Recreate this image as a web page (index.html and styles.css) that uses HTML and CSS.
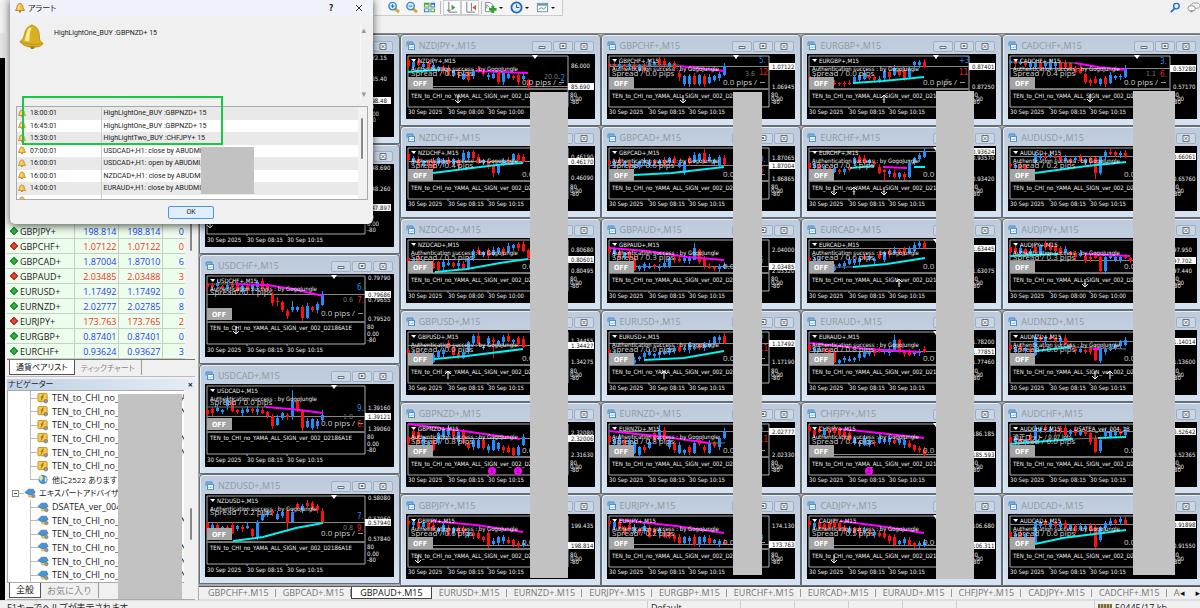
FILE: index.html
```html
<!DOCTYPE html>
<html lang="ja">
<head>
<meta charset="utf-8">
<title>GBPAUD+,M15</title>
<link rel="stylesheet" href="styles.css">
</head>
<body>
<svg class="defs" aria-hidden="true">
  <symbol id="bell" viewBox="0 0 28 28"><path d="M13 2q2-2 4 0c5 2 6 7 6 12 0 3 1 5 4 7q-2 4-11 4T2 19c3-2 4-4 5-8 1-5 3-8 6-9z" fill="#d8b022" stroke="#b8921f"/><path d="M12 4c-3 3-3 9-5 14l5 1c1-5 0-11 3-15z" fill="#ffec8a"/><path d="M3 19q11 5 23 2" fill="none" stroke="#b8921f"/><path d="M13 24h5l-1 3h-3z" fill="#a97a13"/></symbol>
  <symbol id="bell-small" viewBox="0 0 10 10"><path d="M5 .5c2 0 3 2 3 4l1.500 3h-9L2 4.500c0-2 1-4 3-4z" fill="#f3bf4c" stroke="#c98a25"/><path d="M4 2.500v4" stroke="#fff0b0"/><path d="M4 8h2v1.500H4z" fill="#b5761b"/></symbol>
  <symbol id="script" viewBox="0 0 12 12"><rect x=".5" y=".5" width="10" height="9" rx="1" fill="#f5ca4c" stroke="#c28d22"/><path d="M7 2Q5 2 5 5T3.500 8M3.500 4.500h3" stroke="#8b5d0c" fill="none"/><circle cx="9" cy="9" r="2" fill="#999" stroke="#666" stroke-width=".6"/></symbol>
  <symbol id="expert" viewBox="0 0 14 12"><path d="M1 5 5 1l6 0 2 4-6 3z" fill="#4a94d6" stroke="#28649c" stroke-width=".7"/><path d="M4 7q4 3 7-1v3q-3 3-6 1z" fill="#e9bd52"/><circle cx="11" cy="9" r="2" fill="#999" stroke="#666" stroke-width=".6"/></symbol>
  <symbol id="globe" viewBox="0 0 12 12"><circle cx="6" cy="6" r="5" fill="#3f93e0"/><path d="M3 2q3 0 3 3L4 8Q1 6 2 3zM8 3l2 1v4L8 9z" fill="#f1e27d"/></symbol>
  <symbol id="pages" viewBox="0 0 10 10"><path d="M1 5V1h6v2M1 2h6" fill="none" stroke="#4b93d3"/><rect x="2.500" y="3.500" width="6" height="5" fill="#fff" stroke="#4b93d3"/><path d="M4 7V5.500M5.500 7V6M7 7V5" stroke="#4b93d3" stroke-width=".7"/></symbol>
</svg>

<div class="app">
  <header class="toolbar">
    <div class="tools">
      <button class="tool" aria-label="拡大"><svg viewBox="0 0 14 14"><path d="m8 8 5 4" stroke="#d9a52c" stroke-width="3"/><circle cx="6" cy="5.500" r="4" fill="#d5ecfb" stroke="#3c86c4" stroke-width="1.500"/><path d="M4 5.500h4M6 3.500v4" stroke="#2668a8"/></svg></button>
      <button class="tool" aria-label="縮小"><svg viewBox="0 0 14 14"><path d="m8 8 5 4" stroke="#d9a52c" stroke-width="3"/><circle cx="6" cy="5.500" r="4" fill="#d5ecfb" stroke="#3c86c4" stroke-width="1.500"/><path d="M4 5.500h4" stroke="#2668a8"/></svg></button>
      <button class="tool" aria-label="ウィンドウの整列"><svg viewBox="0 0 14 14"><path d="M1 2h6v5H1zM8 8h5v4H8z" fill="#4aa33a"/><path d="M8 2h5v5H8zM1 8h6v4H1z" fill="#3679bd"/><path d="M2 4h4v2H2zM9 4h3v2H9zM2 9h4v2H2zM9 9h3v2H9z" fill="#e6f3f7"/></svg></button>
      <span class="rule"></span>
      <button class="tool pressed" aria-label="自動スクロール"><svg viewBox="0 0 14 14"><path d="M3 1v11h9M1 10h4" fill="none" stroke="#777"/><path d="m6 4 4 3-4 3z" fill="#37a53d"/></svg></button>
      <button class="tool pressed" aria-label="チャートシフト"><svg viewBox="0 0 14 14"><path d="M3 1v11h9M8 2v9" fill="none" stroke="#777"/><path d="m13 4-4 3 4 3z" fill="#c95a4b"/></svg></button>
      <span class="rule"></span>
      <button class="tool wide" aria-label="インディケータ"><svg viewBox="0 0 14 14"><path d="M1.500 1.500h5l3 3v7h-8z" fill="#fff" stroke="#888"/><path d="M3 8V4l3 3" stroke="#888" fill="none"/><path d="M9.500 5v8M5.500 9h8" stroke="#24a52f" stroke-width="3"/></svg></button>
      <button class="tool wide" aria-label="時間足"><svg viewBox="0 0 14 14"><circle cx="7" cy="7" r="5.500" fill="#d8ebf8" stroke="#2369b4" stroke-width="2"/><path d="M7 4v3h3" stroke="#444" fill="none"/></svg></button>
      <button class="tool wide" aria-label="テンプレート"><svg viewBox="0 0 14 14"><rect x="1.500" y="2.500" width="11" height="9" fill="#f4faff" stroke="#6a92b4"/><path d="M2 4h10" stroke="#6a92b4" stroke-width="2"/><path d="m3 9 3-2 2 2 3-3" stroke="#5a9b3d" fill="none"/></svg></button>
    </div>
    <div class="tools-end">
      <button class="tool" aria-label="検索"><svg viewBox="0 0 14 14"><path d="m6 8-4 4" stroke="#2b6fc1" stroke-width="2"/><circle cx="8" cy="5.500" r="3" fill="#e8f3ff" stroke="#2b6fc1" stroke-width="1.500"/></svg></button>
      <button class="tool" aria-label="チャット"><svg viewBox="0 0 14 14"><ellipse cx="9" cy="5" rx="5" ry="3" fill="#eee" stroke="#999"/><ellipse cx="5" cy="8" rx="4" ry="3" fill="#fff" stroke="#888"/><path d="M4 10v3l3-3" fill="#888"/></svg></button>
    </div>
  </header>

  <div class="body">
    <aside class="side">
      <section class="market">
        <div class="market-list">
          <table class="quotes">
            <tbody>
              <tr class="up"><td>GBPJPY+</td><td>198.814</td><td>198.814</td><td>0</td></tr>
              <tr class="down"><td>GBPCHF+</td><td>1.07122</td><td>1.07122</td><td>0</td></tr>
              <tr class="up"><td>GBPCAD+</td><td>1.87004</td><td>1.87010</td><td>6</td></tr>
              <tr class="down"><td>GBPAUD+</td><td>2.03485</td><td>2.03488</td><td>3</td></tr>
              <tr class="up"><td>EURUSD+</td><td>1.17492</td><td>1.17492</td><td>0</td></tr>
              <tr class="up"><td>EURNZD+</td><td>2.02777</td><td>2.02785</td><td>8</td></tr>
              <tr class="down"><td>EURJPY+</td><td>173.763</td><td>173.765</td><td>2</td></tr>
              <tr class="up"><td>EURGBP+</td><td>0.87401</td><td>0.87401</td><td>0</td></tr>
              <tr class="up"><td>EURCHF+</td><td>0.93624</td><td>0.93627</td><td>3</td></tr>
            </tbody>
          </table>
          <span class="thumb market-thumb"></span>
        </div>
        <nav class="panel-tabs market-tabs"><button class="active">通貨ペアリスト</button><button>ティックチャート</button></nav>
      </section>
      <section class="navigator">
        <h2 class="panel-title">ナビゲーター<button aria-label="閉じる">×</button></h2>
        <ul class="tree">
          <li><svg><use href="#script"/></svg>TEN_to_CHI_no_TEN_ver_002_YAMAI</li>
          <li><svg><use href="#script"/></svg>TEN_to_CHI_no_YAMA_ALL_SIGNI</li>
          <li><svg><use href="#script"/></svg>TEN_to_CHI_no_YAMA_ALL_SIG</li>
          <li><svg><use href="#script"/></svg>TEN_to_CHI_no_YAMA_ALL_SIGN</li>
          <li><svg><use href="#script"/></svg>TEN_to_CHI_no_YAMA_ALL_SIGN</li>
          <li><svg><use href="#script"/></svg>TEN_to_CHI_no_YAMA_ALL</li>
          <li class="last"><svg><use href="#globe"/></svg>他に2522 あります</li>
          <li class="parent"><span class="expander"></span><svg><use href="#expert"/></svg>エキスパートアドバイザ</li>
          <li><svg><use href="#expert"/></svg>DSATEA_ver_004</li>
          <li><svg><use href="#expert"/></svg>TEN_to_CHI_no_YAMA_ALL_SIGN_</li>
          <li><svg><use href="#expert"/></svg>TEN_to_CHI_no_YAMA_ALL_SIG</li>
          <li><svg><use href="#expert"/></svg>TEN_to_CHI_no_YAMA_ALL_SIGN_</li>
          <li><svg><use href="#expert"/></svg>TEN_to_CHI_no_YAMA_ALL_SIGN</li>
          <li><svg><use href="#expert"/></svg>TEN_to_CHI_no_YAMA_ALL_SIGN</li>
        </ul>
        <nav class="panel-tabs nav-tabs"><button class="active">全般</button><button>お気に入り</button></nav>
        <span class="thumb nav-thumb"></span>
        <span class="mask mask-nav"></span>
      </section>
    </aside>

    <main class="workspace">
      <div class="mdi" id="mdi"></div>
      <nav class="chart-tabs">
        <button>GBPCHF+.M15</button><button>GBPCAD+.M15</button><button class="active">GBPAUD+.M15</button><button>EURUSD+.M15</button><button>EURNZD+.M15</button><button>EURJPY+.M15</button><button>EURGBP+.M15</button><button>EURCHF+.M15</button><button>EURCAD+.M15</button><button>EURAUD+.M15</button><button>CHFJPY+.M15</button><button>CADJPY+.M15</button><button>CADCHF+.M15</button><button>AUDUSD+.M15</button>
        <span class="tab-arrows"><button aria-label="前へ">◂</button><button aria-label="次へ">▸</button></span>
      </nav>
    </main>
  </div>

  <footer class="status">
    <span class="help">F1キーでヘルプが表示されます</span><span class="profile">Default</span><span></span><span></span><span></span><span></span><span></span><span class="traffic"><i></i>50445/17 kb</span>
  </footer>
</div>

<span class="mask mask-a"></span>
<span class="mask mask-b"></span>
<span class="mask mask-c"></span>
<span class="mask mask-d"></span>

<section class="alert" role="dialog" aria-label="アラート">
  <header class="alert-title"><svg><use href="#bell-small"/></svg><h1>アラート</h1><button aria-label="ヘルプ">?</button><button class="close" aria-label="閉じる"><svg viewBox="0 0 8 8"><path d="m1 1 6 6M7 1 1 7" stroke="#333" fill="none"/></svg></button></header>
  <div class="alert-message"><svg><use href="#bell"/></svg><p>HighLightOne_BUY :GBPNZD+ 15</p><span class="scroller"><i>▴</i><i>▾</i></span></div>
  <div class="alert-list">
    <table>
      <tbody>
        <tr><td><svg><use href="#bell-small"/></svg>18:00:01</td><td>HighLightOne_BUY :GBPNZD+ 15</td></tr>
        <tr><td><svg><use href="#bell-small"/></svg>16:45:01</td><td>HighLightOne_BUY :GBPNZD+ 15</td></tr>
        <tr><td><svg><use href="#bell-small"/></svg>15:30:01</td><td>HighLightTwo_BUY :CHFJPY+ 15</td></tr>
        <tr><td><svg><use href="#bell-small"/></svg>07:00:01</td><td>USDCAD+,H1: close by ABUDMI_</td></tr>
        <tr><td><svg><use href="#bell-small"/></svg>16:00:01</td><td>USDCAD+,H1: open by ABUDMI_</td></tr>
        <tr><td><svg><use href="#bell-small"/></svg>16:00:01</td><td>NZDCAD+,H1: close by ABUDMI_</td></tr>
        <tr><td><svg><use href="#bell-small"/></svg>14:00:01</td><td>EURAUD+,H1: close by ABUDMI_</td></tr>
        <tr><td><svg><use href="#bell-small"/></svg></td><td></td></tr>
      </tbody>
    </table>
    <span class="thumb alert-thumb"></span>
  </div>
  <button class="ok">OK</button>
  <span class="mask mask-alert"></span>
  <span class="highlight"></span>
</section>
<script src="charts.js"></script>
</body>
</html>
```

FILE: styles.css
```css
* { box-sizing: border-box; }
body { margin: 0; font: 9px/12px "Open Sans", "Noto Sans CJK JP", sans-serif; color: #222; background: #f0f0f0; overflow: hidden; }
button { font: inherit; color: inherit; border: 0; padding: 0; background: none; }
h1, h2, p, ul { margin: 0; padding: 0; font-size: inherit; font-weight: 400; list-style: none; }
.defs { position: absolute; width: 0; height: 0; }
.app { height: 100vh; display: flex; flex-direction: column; overflow: hidden; }

.toolbar { flex: none; height: 33px; display: flex; justify-content: space-between; align-items: flex-start; padding-left: 374px; background: #f0f0f0; }
.tools { display: flex; align-items: center; height: 16px; padding: 0 0 0 10px; border-right: 1px solid #ccc; border-bottom: 1px solid #ccc; background: #f5f5f5; }
.tool { width: 18px; height: 15px; display: flex; align-items: center; justify-content: center; }
.tool svg { width: 13px; height: 13px; }
.tool.pressed { background: #fafafa; border: 1px solid #ccc; }
.tool.wide { width: 26px; justify-content: flex-start; gap: 2px; }
.tool.wide::after { content: ""; border: 2px solid transparent; border-top-color: #111; margin-top: 2px; }
.rule { width: 1px; height: 13px; margin: 0 2px; background: #bbb; }
.tools-end { display: flex; height: 15px; margin-right: -2px; }

.body { flex: 1; min-height: 0; display: flex; }
.body::before { content: ""; flex: none; width: 5px; background: linear-gradient(#e4e4e4 25px, #000 25px); }
.side { flex: none; width: 194px; display: grid; grid-template-rows: minmax(0, 17fr) minmax(0, 11fr); background: #f0f0f0; border-right: 1px solid #aaa; padding: 0 3px 0 2px; }
.market { display: flex; flex-direction: column; border-bottom: 1px solid #bbb; padding-bottom: 1px; }
.market-list { flex: 1; display: flex; justify-content: space-between; align-items: flex-end; background: #f1f1f1; border-bottom: 1px solid #777; }
.quotes { border-collapse: collapse; table-layout: fixed; width: 178px; background: #edfdec; }
.quotes td { height: 15px; padding: 1px 1px 0; line-height: 13px; text-align: right; border-right: 1px solid #c6cfc6; border-bottom: 1px solid #c6cfc6; color: #263ee8; }
.quotes td:first-child { width: 67px; text-align: left; color: #222; padding-left: 3px; }
.quotes td:nth-child(2), .quotes td:nth-child(3) { width: 44px; }
.quotes td:last-child { border-right: 0; }
.quotes .down td:not(:first-child) { color: #ee3426; }
.quotes td:first-child::before { content: ""; display: inline-block; width: 4px; height: 4px; margin: 0 3px 1px 1px; transform: rotate(45deg); background: #31b344; border: 1px solid #198127; }
.quotes .down td:first-child::before { background: #e0483c; border-color: #aa211a; }
.thumb { width: 2px; border-radius: 1px; background: #888; }
.market-thumb { height: 135px; margin-bottom: 108px; margin-right: 3px; }
.panel-tabs { display: flex; height: 15px; padding-left: 2px; }
.panel-tabs button { padding: 0 6px; color: #888; border-right: 1px solid #999; line-height: 14px; }
.panel-tabs .active { color: #111; background: #fff; border: 1px solid #555; border-top: 0; }
.market-tabs button { font-size: 8px; font-feature-settings: "palt"; }
.navigator { position: relative; display: flex; flex-direction: column; padding: 2px 0 1px; border-bottom: 1px solid #aaa; }
.panel-title { display: flex; justify-content: space-between; height: 11px; font-size: 8px; line-height: 10px; padding: 0 2px 0 1px; background: linear-gradient(90deg, #bed0e4, #e5edf5); font-feature-settings: "palt"; }
.panel-title button { font-weight: 700; font-size: 9px; }
.tree { flex: 1; min-height: 0; display: grid; grid-auto-rows: minmax(0, 1fr); margin-right: 11px; overflow: hidden; background: #fff; border: 1px solid #aaa; border-width: 1px 0 1px 1px; }
.tree li { position: relative; display: flex; align-items: center; gap: 3px; padding-left: 29px; white-space: nowrap; overflow: hidden; }
.tree li::before { content: ""; position: absolute; left: 22px; top: 0; bottom: 0; width: 7px; border-left: 1px solid #bbb; background: linear-gradient(#bbb, #bbb) 0 50% / 7px 1px no-repeat; }
.tree .last { font-size: 8px; font-feature-settings: "palt"; }
.tree .last::before { bottom: 50%; background: none; border-bottom: 1px solid #bbb; }
.tree svg { flex: none; width: 12px; height: 11px; }
.tree .parent { padding-left: 4px; font-size: 8px; font-feature-settings: "palt"; }
.tree .parent::before { left: 10px; top: 50%; border: 0; width: 6px; height: 1px; }
.tree .parent svg { margin-left: 2px; }
.expander { width: 7px; height: 7px; border: 1px solid #888; background: linear-gradient(#447, #447) 50% 50% / 3px 1px no-repeat #fff; }
.nav-tabs { margin-right: 8px; }
.nav-thumb { position: absolute; right: 3px; top: 131px; height: 32px; }

.workspace { flex: 1; min-width: 0; display: flex; flex-direction: column; overflow: hidden; background: #f0f0f0; }
.mdi { flex: none; display: grid; grid-template-columns: repeat(5, minmax(0, 1fr)); width: calc(100% + 3px); background: #aaa; border-top: 1px solid #888; border-bottom: 1px solid #555; }
.mdi-column { display: flex; flex-direction: column; }
.window { padding: 0 5px 6px; border: 1px solid #666d75; border-radius: 4px 4px 0 0; background: linear-gradient(#bccadb, #d5e3f2); box-shadow: inset 1px 1px #e6eef6; }
.window-title { display: flex; align-items: center; height: 19px; padding: 3px 1px 0 0; color: #9298a0; }
.window-title > svg { width: 10px; height: 10px; margin-right: 3px; }
.window-title h3 { flex: 1; margin: 0; font-size: 9px; font-weight: 400; }
.window-title button { width: 20px; height: 11px; margin-left: 1px; border: 1px solid #9eb0c4; border-radius: 2px; background: #c9d6e5; display: grid; place-items: center; }
.window-title button svg { width: 8px; height: 7px; }
.chart { display: block; width: 100%; background: #000; font-family: "DejaVu Sans Condensed", "Noto Sans CJK JP", sans-serif; font-size: 6px; fill: #eee; }
.chart .spread { font: 8px "Open Sans", sans-serif; fill: #ccc; }
.chart .pips { font: 8px "Open Sans", sans-serif; fill: #ccc; }
.chart .off { font: 700 7px "DejaVu Sans Condensed", sans-serif; fill: #fff; text-anchor: middle; }
.chart .dark { fill: #111; }
.chart .blue { fill: #248be8; font-size: 8px; }
.chart .red { fill: #e02626; font-size: 8px; }
.chart .dim { fill: #777; font-size: 7px; }
.chart .mark { fill: none; stroke: #fff; stroke-width: 1; }
.chart .badge { fill: #f0f; }

.chart-tabs { position: relative; flex: none; display: flex; height: 13px; padding-left: 2px; overflow: hidden; background: #f0f0f0; border-bottom: 1px solid #ddd; color: #777; }
.chart-tabs > button { flex: none; padding: 0 7px; line-height: 12px; background: linear-gradient(#999, #999) 100% 50% / 1px 8px no-repeat; }
.chart-tabs > .active { color: #111; background: #fff; border: 1px solid #444; border-top: 0; padding: 0 8px; }
.tab-arrows { position: absolute; right: 0; top: 0; height: 12px; width: 20px; display: flex; justify-content: space-between; background: #f0f0f0; color: #111; font: 9px/11px "DejaVu Sans", sans-serif; }

.status { flex: none; height: 8px; display: flex; overflow: hidden; border-top: 1px solid #ddd; padding-left: 7px; background: #f0f0f0; }
.status span { flex: none; width: 54px; padding-left: 3px; border-left: 1px solid #ccc; line-height: 14px; }
.status .help { width: 640px; padding: 0; border: 0; font-feature-settings: "palt"; }
.status .profile { width: 93px; }
.status .traffic { flex: 1; margin-left: 84px; }
.traffic i { display: inline-block; width: 14px; height: 7px; margin-right: 3px; background: repeating-linear-gradient(90deg, #7d6c36 0 2px, #c4b98c 2px 3px); }

.mask { position: absolute; background: #c2c2c2; }
.mask-a { left: 530px; top: 92px; width: 38px; height: 486px; }
.mask-b { left: 733px; top: 92px; width: 29px; height: 483px; }
.mask-c { left: 936px; top: 91px; width: 38px; height: 488px; }
.mask-d { left: 1133px; top: 91px; width: 42px; height: 484px; }
.mask-nav { left: 111px; top: 17px; width: 64px; height: 205px; }
.mask-alert { left: 191px; top: 149px; width: 53px; height: 47px; }

.alert { position: absolute; left: 10px; top: -2px; width: 363px; padding: 2px 5px 5px 6px; background: #f0f0f0; border-radius: 0 0 5px 5px; box-shadow: 0 2px 9px rgba(0, 0, 0, .65); font: 7px/12px Roboto, sans-serif; }
.alert-title { display: flex; align-items: center; height: 17px; margin: 0 -5px 0 -6px; padding: 0 9px 2px 5px; background: #eff3f9; font: 9px/14px "Noto Sans CJK JP", sans-serif; }
.alert-title > svg { width: 10px; height: 10px; margin-right: 3px; }
.alert-title h1 { flex: 1; font-size: 8px; font-feature-settings: "palt"; }
.alert-title button { width: 10px; margin-left: 18px; font-weight: 700; }
.alert-title button svg { width: 8px; height: 8px; display: block; margin: auto; }
.alert-message { display: flex; align-items: flex-start; height: 89px; padding: 7px 2px 6px; }
.alert-message > svg { width: 26px; height: 26px; margin-right: 10px; }
.alert-message p { flex: 1; padding-top: 3px; }
.scroller { display: flex; flex-direction: column; justify-content: space-between; align-self: stretch; color: #999; border-left: 1px solid #f8f8f8; font: 9px/12px "DejaVu Sans", sans-serif; }
.scroller i { font-style: normal; }
.alert-list { display: flex; justify-content: space-between; height: 94px; overflow: hidden; border: 1px solid #aaa; background: #f2f2f2; }
.alert-list table { border-collapse: collapse; table-layout: fixed; width: 341px; height: 100px; }
.alert-list td { height: 12px; padding: 0 2px; line-height: 11px; background: #fff; }
.alert-list tr:nth-child(odd) td { height: 13px; background: #e9e9e9; }
.alert-list td:first-child { width: 84px; padding-left: 1px; border-right: 1px solid #ccc; }
.alert-list td svg { width: 8px; height: 9px; margin-right: 4px; vertical-align: middle; }
.alert-thumb { height: 41px; margin: 11px 4px 0 0; }
.ok { display: block; width: 46px; height: 13px; margin: 6px auto 0 152px; border: 1px solid #4a98de; border-radius: 2px; background: #e1edf9; line-height: 11px; }
.highlight { position: absolute; left: 12px; top: 98px; width: 201px; height: 49px; border: 2px solid #17c944; }
```

FILE: charts.js
```js
// Candle tokens: colour, body top-bottom, optional /wick top-bottom; "." skips a slot.
const columns = [
  { tall: true, windows: [
    { name: '', spread: '0.3', price: 46, labels: [[4, '372.15'], [25, '335.40'], [46, '198.48']], k: '', line: [] },
    { name: '', spread: '0.2', price: 43, labels: [[4, '148.690'], [25, '148.260'], [43, '147.897']], k: '', line: [], marks: [[5, 60, 'd']] },
    { name: 'USDCHF', spread: '0.1', price: 20, labels: [[4, '0.79790'], [20, '0.79686'], [26, '0.79655'], [45, '0.79520']], nums: [[13, '6.'], [26, '0.6'], [26, '7.']],
      k: 'r10-13 r11-13 b9-12 r12-14 b11-14 r10-13 r9-17 b12-18 r12-16 b11-15 b8-13 r7-15/4-16 r10-15 r20-29 r27-28/23-32 r28-36 r37-42 b33-36/27-38 b33-36 r33-44 b32-44 r33-36 b30-36 b20-31', line: [['g', '2,10 31,10'], ['m', '31,10 62,11 88,15 118,22']], marks: [[31, 56, 'd']] },
    { name: 'USDCAD', spread: '0.0', price: 32, labels: [[24, '1.39160'], [32, '1.39121'], [45, '1.39060']], nums: [[24, '9.'], [33, '1.8'], [40, '6.']],
      k: 'r26-30 r25-29 b24-27 b26-28 b16-22/12-26 r17-27 r26-28 b26-29 b25-28 r25-27 b25-28 r26-29 r28-32 r32-42 b34-41 b29-34 r31-33 b17-32/6-36 r17-26 r27-44 b37-43 b35-44 b37-42 b31-36/26-37', line: [['g', '2,23 61,23'], ['m', '61,23 85,25 102,27 118,29']] },
    { name: 'NZDUSD', spread: '0.2', price: 28, labels: [[4, '0.58080'], [25, '0.57960'], [28, '0.57940'], [45, '0.57840']], nums: [[22, '7.'], [34, '0.8'], [34, '9.']],
      k: 'r29-36 b31-34 r31-37 b33-36 r33-39 r31-39 b32-35 r33-35 b32-34 r35-42 b28-43 b20-26 b17-21 r17-19 b20-25 b18-22 r17-29/14-38 b18-28 r10-14 b12-16 r9-12 r9-16/7-16 r12-16 r17-29', line: [['c', '28,47 58,43 91,34 118,29']] }
  ] },
  { windows: [
    { name: 'NZDJPY', spread: '0.5', early: true, price: 32, labels: [[12, '86.000'], [32, '85.690']], nums: [[24, '-2'], [23, '20.0'], [30, '–']],
      k: 'r6-12 b8-13 r7-11 b10-13 r9-14 b11-15 b13-16 r13-17 r14-21 b17-21 r18-21 b20-25 r18-26 b17-22 r15-18 r17-20 b21-23 b20-24 r19-28 b19-28 b20-24 r22-24 r21-28 b22-25 r26-33', line: [['c', '2,18 31,16'], ['g', '31,16 70,17'], ['m', '70,17 122,19']], marks: [[52, 45, 'd']] },
    { name: 'NZDCHF', spread: '0.4', price: 15, labels: [[11, '0.46190'], [15, '0.46170'], [32, '0.46090']],
      k: 'r8-14 b12-16 r13-19 b15-20 r16-20 r15-22 b12-18 b14-18 r14-18 b13-18 r14-20 b7-14 b6-12 r6-12 r11-17 b14-17 r15-20 r19-27/17-31 b19-27 b14-17 r14-17 b8-14 r9-14 r11-16', line: [['c', '27,27 74,21 100,18 117,17']] },
    { name: 'NZDCAD', spread: '0.5', early: true, price: 21, labels: [[12, '0.80680'], [21, '0.80601'], [33, '0.80495']],
      k: 'r20-24 b22-25 r20-25 b22-25 r24-28 r25-30 r24-32 b24-29 b25-27 r25-28 b25-28 r26-30 b20-30 b13-20 r12-16 b14-17 r12-18 b12-17 b10-14 r11-15 b8-14 b7-10 r6-10 r6-13 r12-20', line: [['c', '29,34 61,31 94,25 122,21']] },
    { name: 'GBPUSD', spread: '0.0', price: 15, labels: [[11, '1.34455'], [15, '1.34427'], [32, '1.34275']],
      k: 'r20-24 b22-25 r22-26 b22-25 r24-28 b25-32 b21-27 b20-24 r13-18 r18-25 r24-26 b22-28 b12-22 b6-13 r6-14 b17-18 b8-13 r10-12/7-28 b11-14 b7-12 r6-11 b10-12 r8-14 r9-17', line: [['c', '28,29 61,26 117,19']], marks: [[42, 45, 'u']] },
    { name: 'GBPNZD', spread: '0.8', price: 16, labels: [[11, '2.32080'], [16, '2.32006'], [33, '2.31630']],
      k: 'r15-21 r9-17 r10-21 b15-28 b20-23 r18-28 b11-21 b7-15 b6-13 r8-14 b10-20 r10-21 r21-26 b18-25 b18-26 r18-26 b24-28 b18-28 b21-27 r25-28 r26-30 r26-33 b25-33 b15-23', line: [['m', '2,2 50,8 114,17']], marks: [[86, 49, '1'], [112, 49, '1']] },
    { name: 'GBPJPY', spread: '0.6', price: 31, labels: [[12, '199.435'], [31, '198.814']],
      k: 'r7-10 b8-11 r8-13 b9-13 r9-14 r11-16 b14-18 b11-18 r14-21 b14-19 r14-19 r15-19 b18-22 r19-22 r19-24 r23-26 r19-31 b27-30 b23-29 b23-27 r26-29 r26-31 r29-32 b29-32', line: [['m', '25,7 70,11 117,18']], marks: [[12, 45, 'd']] }
  ] },
  { windows: [
    { name: 'GBPCHF', spread: '0.0', price: 12, labels: [[12, '1.07122'], [33, '1.06945']], nums: [[6, '5.'], [20, '3.6'], [18, '12']],
      k: 'r10-12 r10-12 b10-13 r11-13 b10-13 r11-15 b11-16 r11-16 b9-12 b8-11 r5-11 r7-11 b9-12 r9-14 r19-23/16-27 b22-30 b22-30 r22-30 b21-30 r22-30 b23-29 b22-26 b20-24 b12-21', line: [['g', '2,11 72,11'], ['m', '72,12 117,17']], marks: [[76, 45, 'd']] },
    { name: 'GBPCAD', spread: '0.6', price: 19, labels: [[12, '1.87065'], [19, '1.87004'], [33, '1.86865']], nums: [[13, '0.'], [0, ''], [24, '6']],
      k: 'r15-18 b16-19 r14-18 b16-20 r17-21 b18-22 b16-21 b14-17 b16-20 r14-17 b15-18 r14-19 b12-16 r12-17 b17-21 b16-27 r12-17 b9-16 b8-14 r7-17/3-17 b11-15 b14-17 b11-19 r12-18', line: [['c', '27,29 65,27 117,21']] },
    { name: 'GBPAUD', spread: '0.3', price: 28, labels: [[12, '2.04000'], [28, '2.03485'], [33, '2.03320']], nums: [[22, '6'], [0, ''], [28, '–']],
      k: 'r9-14 b11-16 r14-20 b15-20 r14-20 r20-32 b28-31 b26-30 b28-30 r27-29 b28-30 b25-29 b20-28 r20-22 r21-23 b20-23 b20-23 b10-22/5-22 r12-24 r20-28 r28-30 r29-31 b28-31 b27-30', line: [['m', '2,10 40,13 80,19 117,22']] },
    { name: 'EURUSD', spread: '0.0', price: 13, labels: [[13, '1.17492'], [32, '1.17190']], nums: [[6, '6'], [0, ''], [18, '11']],
      k: 'r20-23 b22-25 b25-27 b26-29 r28-31 b30-33 b27-29 b23-27 b22-25 b24-26 b22-25 b21-24 b18-23 b18-21 r17-21 b18-20 b14-20 b17-19 r15-18 b14-18 b13-17 b7-13 b7-10 r6-13', line: [['c', '37,30 77,28 117,21']], marks: [[57, 45, 'u']] },
    { name: 'EURNZD', spread: '0.8', price: 9, labels: [[9, '2.02777'], [33, '2.02330']], nums: [[6, '6'], [0, ''], [17, '11']],
      k: 'r14-20 b17-22 b15-25 r18-25 b18-28 b20-31 b25-33 r25-28 b20-26 r11-18 b8-18/3-20 r8-18 b18-25 r21-28 b23-31 b28-31 r25-30 b21-31 r18-22 r25-28 b21-31 r20-24 b16-25 b9-16', line: [['m', '2,9 59,15 102,21'], ['g', '102,21 118,21']] },
    { name: 'EURJPY', spread: '0.2', price: 30, labels: [[12, '174.130'], [30, '173.763']], nums: [[24, '9'], [0, ''], [30, '–']],
      k: 'r7-10 b8-13 r8-14 r13-19 r11-15 b13-19 r15-19 b12-17 r14-23 r15-19 b15-19 r18-23 r18-23 r21-25 r23-29 b23-29 b24-27 r23-31 b23-31 b23-28 r24-29 b26-29 b27-30 r28-30', line: [['m', '13,6 69,12 117,19']] }
  ] },
  { windows: [
    { name: 'EURGBP', spread: '0.0', price: 12, labels: [[12, '0.87401'], [33, '0.87250']], nums: [[6, '+3'], [28, '6'], [18, '11']],
      k: 'r22-24 b23-26 r24-28 r26-29 r29-30 r29-30 r29-30 r29-30 r29-30 b23-28 b21-26 b19-25 r22-24 r23-26 b25-28 b17-24 r18-23 b14-21 r16-21 r16-24 b15-23 b8-11 b8-11 r8-13', line: [['c', '46,29 76,27 117,23']], marks: [[77, 45, 'u']] },
    { name: 'EURCHF', spread: '0.3', price: 5, labels: [[5, '0.93624'], [12, '0.93570'], [33, '0.93420']],
      k: 'r17-22 b18-22 r19-23 b20-24 r22-26 b22-26 r24-26 b23-26 r21-24 b12-17 r11-16 r12-17 b14-17 r16-18 r21-27 r24-26/23-35 b25-28 r27-31 b27-31 r28-31 b17-31 b12-17 b9-13 b5-11', line: [['c', '43,22 67,20'], ['m', '76,21 100,22'], ['c', '107,21 118,21']], marks: [[27, 45, 'd'], [47, 45, 'u'], [77, 45, 'd']] },
    { name: 'EURCAD', spread: '0.6', price: 10, labels: [[10, '1.63445'], [33, '1.63075']],
      k: 'r20-22 b21-24 b22-26 b23-28 r28-30 b29-32 b26-28 b25-28 b22-26 b22-25 b20-24 r18-21 b18-21 b21-23 r16-20 b14-22 r13-16 b12-15 r12-15 r11-15 b11-15 b7-13/4-14 b5-8 r5-10', line: [['g', '27,29 46,29'], ['c', '46,29 80,26 118,20']], marks: [[92, 45, 'u']] },
    { name: 'EURAUD', spread: '0.8', price: 21, labels: [[12, '1.78200'], [21, '1.77851'], [32, '1.77460']],
      k: 'r15-20 b18-22 b19-21 r19-22 r20-23 r22-32 b30-33 b28-30 b29-31 b28-30 b24-28 b22-27 b22-24 r20-23 r20-22 b20-22 b19-23 b10-22/5-22 r10-21 r22-24 r22-25 b22-24 b21-23 r19-22', line: [['m', '2,13 60,19 113,22']] },
    { name: 'CHFJPY', spread: '0.4', price: 32, labels: [[12, '186.185'], [32, '185.593']],
      k: 'r5-9 r8-13 r7-10 b8-13 r8-11 r6-11 r6-13 r10-15 r11-18 b16-21 b20-22 b16-23 b18-23 r20-21 b15-21 b17-20 b16-20 r18-21 b17-21 b18-23 r21-25 r23-28 r26-28 r28-33', line: [['m', '33,7 72,11 117,16']], marks: [[62, 49, '2']] },
    { name: 'CADJPY', spread: '0.5', price: 31, labels: [[12, '106.680'], [31, '106.311']],
      k: 'r7-11 b9-13 r8-14 r10-15 r9-14 r8-13 r9-15 r13-17 b15-19 r14-19 r14-19 b16-19 r17-20 b18-21 r19-22 r19-23 r22-27 r23-31 b27-30 b25-29 r26-31 r29-32 b29-32 b28-32', line: [['m', '33,7 72,12 117,19']], marks: [[27, 45, 'd']] }
  ] },
  { windows: [
    { name: 'CADCHF', spread: '0.4', price: 14, labels: [[14, '0.57280'], [33, '0.57170']], nums: [[7, '3.'], [20, '1.1'], [20, '6.']],
      k: 'b7-9 r7-10 b8-10 r9-11 b8-13 b9-13 r8-14 b9-12 b8-15 b8-12 r8-14 r9-13 r9-14 r14-18 r14-19 r20-28 r26-29 r25-29 b25-30 r24-30 b21-29 b22-24 b22-23 b14-23', line: [['g', '2,8 67,9'], ['m', '67,9 90,13 118,16']], marks: [[82, 44, 'd']] },
    { name: 'AUDUSD', spread: '0.2', price: 10, labels: [[10, '0.66061'], [33, '0.65760']],
      k: 'r18-20 b19-21 r19-23 r19-23 . b9-17 b10-12 r10-12 b9-11 r10-12 r11-14 b12-15 r13-16 b12-14 r11-15 b13-17 r12-17 r12-27/11-33 b11-27 b6-11 r6-8 r6-9 b7-9 r7-11', line: [['c', '27,27 79,20 118,16']] },
    { name: 'AUDJPY', spread: '0.3', early: true, price: 22, labels: [[12, '97.950'], [22, '97.702'], [33, '97.440']],
      k: 'r9-14 r10-14 b10-15 r11-17 b13-16 r9-14 b7-17 r5-9 r7-12 r8-13 r10-15 b11-15 r14-17 r15-19 b15-18 r18-23 r19-21 r17-20 r19-33 b19-33 b17-20 b19-22 b19-22 r19-20 r20-23', line: [['c', '2,18 50,16'], ['m', '76,16 122,18']], marks: [[77, 45, 'd']] },
    { name: 'AUDNZD', spread: '0.6', price: 11, labels: [[11, '1.14014'], [32, '1.13600']],
      k: 'r15-19 b17-22 r17-20 b18-21 r19-22 b7-25 r7-10 b7-11 r7-9 r8-11 b8-12 r8-14 r14-17 r19-21 b19-22 r20-22 r18-22 r18-30 b18-31 b19-22 b17-20 b15-18 b12-16 b10-15', line: [['c', '27,21 63,17'], ['g', '63,17 118,19'], ['m', '85,19 92,19']], marks: [[87, 45, 'd'], [102, 45, 'u']] },
    { name: 'AUDCHF', spread: '0.0', price: 9, labels: [[9, '0.52642'], [33, '0.52365']], note: 'DSATEA_ver_004_1B', auth: '適正ロット / 0.07 lots',
      k: 'r15-22 b16-20 r17-20 b18-21 r13-18 b6-18 b7-9 r5-8 b7-10 r8-10 r6-9 r6-13 b8-12 r7-11 b10-13 r9-12 r11-20 r16-30 b18-29 b9-14 b10-15 b10-13 r9-12 b8-13', line: [['c', '2,22 65,17'], ['g', '65,17 90,16'], ['c', '90,16 118,15']] },
    { name: 'AUDCAD', spread: '0.6', price: 10, labels: [[10, '0.91898'], [32, '0.91550']],
      k: 'r18-24 b20-23 r19-24 b20-23 r23-27 b9-29 b8-12 r7-10 b9-13 r8-12 b9-13 r9-14 b11-15 r12-17 b12-16 b12-15 r11-17 r13-33 b13-26 b9-14 b7-11 r6-9 b5-8 r6-10', line: [['c', '27,30 55,24 118,16']] }
  ] }
];

const tones = { r: '#ff1010', b: '#1e8ffc', m: '#ff00ff', c: '#00f2f2', g: '#777' };
const txt = (x, y, s, cls = '') => s ? `<text x="${x}" y="${y}" class="${cls}">${s}</text>` : '';
const box = (x, y, w, h, fill) => `<rect x="${x}" y="${y}" width="${w}" height="${h}" fill="${fill}"/>`;

function candle(token, i) {
  if (token.length < 2) return '';
  const [body, wick] = token.slice(1).split('/').map(p => p.split('-').map(Number));
  const x = 2 + 5 * i;
  const [hi, lo] = wick || [body[0] - 1 - i % 3, body[1] + 1 + (i + 1) % 3];
  const fill = tones[token[0]];
  return box(x, hi, 1, lo - hi, fill) + box(x - 1, body[0], 3, body[1] - body[0], fill);
}

function mark([x, y, kind]) {
  if (kind === 'd') return `<path class="mark" d="M${x} ${y - 4}v8m-3-3 3 3 3-3"/>`;
  if (kind === 'u') return `<path class="mark" d="M${x} ${y + 4}v-8m-3 3 3-3 3 3"/>`;
  return `<circle class="badge" cx="${x}" cy="${y}" r="4"/>` + txt(x - 2, y + 2, kind, 'dark');
}

function chart(w, tall) {
  const g = tall
    ? { h: 83, right: 160, split: 47, base: 70, off: 34, pips: 42, sub: 56, date: 78, scale: [55, 62, 68], auth: 17, spread: 21 }
    : { h: 65, right: 162, split: 34, base: 53, off: 23, pips: 31, sub: 44, date: 60, scale: [43, 47, 50], auth: 17, spread: 22 };
  let s = `<path d="M2 ${g.base}V2H${g.right}V${g.base}H2M42 ${g.base}v2M82 ${g.base}v2" fill="none" stroke="#aaa"/>`;
  s += box(2, g.split, g.right - 2, 2, '#777') + box(2, w.price, g.right - 2, 1, '#888');
  s += w.k.split(' ').map(candle).join('');
  s += w.line.map(([c, p]) => `<polyline points="${p}" fill="none" stroke="${tones[c]}" stroke-width="${c === 'g' ? 1 : 2}"/>`).join('');
  s += '<path d="M5 5h5l-2 3zM126 1h6l-3 4z" fill="#fff"/>';
  if (w.name) s += txt(12, 9, w.name + '+,M15');
  if (w.note) s += txt(66, 9, w.note);
  s += txt(5, g.auth, w.auth || 'Authentication success : by GogoJungle');
  s += txt(5, g.spread, `Spread / ${w.spread} pips`, 'spread');
  s += box(2, g.off, 25, 12, '#a4a4a4') + txt(14, g.off + 9, 'OFF', 'off');
  s += txt(116, g.pips, '0.0 pips / ', 'pips') + box(153, g.pips - 3, 5, 1, '#999');
  if (w.nums) {
    const [a, b, c] = w.nums;
    s += txt(152, a[0] + 3, a[1], 'blue') + txt(138, b[0] + 2, b[1], 'dim') + txt(152, c[0] + 3, c[1], 'red');
  }
  s += txt(5, g.sub, 'TEN_to_CHI_no_YAMA_ALL_SIGN_ver_002_D2186A1E');
  s += ['2025', w.early ? '08:00' : '08:15', w.early ? '10:00' : '10:15'].map((t, i) => txt(2 + 40 * i, g.date, '30 Sep ' + t)).join('');
  s += w.labels.filter(l => l[0] !== w.price).map(l => txt(g.right + 3, l[0] + 2, l[1])).join('');
  s += w.labels.filter(l => l[0] === w.price).map(l => box(g.right, l[0] - 3, 26, 7, '#fff') + txt(g.right + 3, l[0] + 3, l[1], 'dark')).join('');
  s += ['80', '0.00', '-80'].map((t, i) => txt(g.right + 2, g.scale[i], t)).join('');
  s += (w.marks || []).map(mark).join('');
  return `<svg class="chart" height="${g.h}">${s}</svg>`;
}

const glyph = d => `<svg viewBox="0 0 8 7"><path d="${d}" fill="#fff" stroke="#68717c"/></svg>`;
const controls = `<button aria-label="最小化">${glyph('M1 3.500h6v2H1z')}</button><button aria-label="最大化">${glyph('M1 .5h6v5H1zM3 2.500h2v1H3z')}</button><button aria-label="閉じる">${glyph('M1 .5h6v6H1zM2 1.500l4 4M6 1.500l-4 4')}</button>`;

document.getElementById('mdi').innerHTML = columns.map(col =>
  `<div class="mdi-column">${col.windows.map(w =>
    `<article class="window"><header class="window-title"><svg><use href="#pages"/></svg><h3>${w.name ? w.name + '+,M15' : ''}</h3>${controls}</header>${chart(w, col.tall)}</article>`).join('')}</div>`).join('');
```
